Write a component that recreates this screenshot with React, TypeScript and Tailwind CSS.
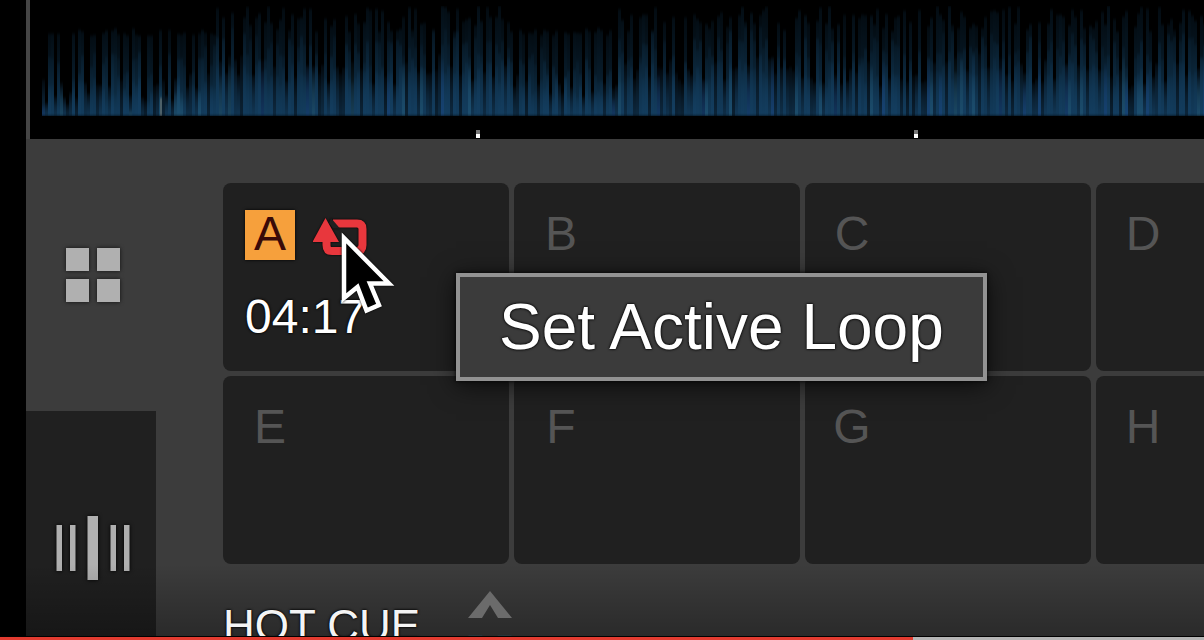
import { useState } from "react";

const PADS = ["A", "B", "C", "D", "E", "F", "G", "H"];
const OUTLINE = "[text-shadow:0_0_3px_#000,0_0_2px_#000]";

// ── Waveform ──────────────────────────────────────────────────────────────────

const WAVE_WIDTH = 1174;
const WAVE_BOTTOM = 116;
const BEATS = [446, 884];

type Bar = { x: number; w: number; y: number; fill: string; opacity: number };

function makeBars(): Bar[] {
  let seed = 41;
  const rand = () => {
    seed = (seed * 16807) % 2147483647;
    return seed / 2147483647;
  };
  const bars: Bar[] = [];
  for (let x = 12; x < WAVE_WIDTH; x += 3) {
    // quieter sections: the intro and the break after the first beat
    const quiet = x < 186 || (x > 478 && x < 588);
    const gap = x % 11 < 3 || rand() > 0.86;
    const swell = Math.sin(x / 17) * 4 + Math.sin(x / 41) * 4;

    if (!gap) {
      bars.push({ x, w: 3, y: quiet ? 28 + rand() * 8 : 6 + rand() * 26, fill: "url(#haze)", opacity: 0.75 + rand() * 0.25 });
      bars.push({ x, w: 3, y: (quiet ? 50 : 34) + swell + rand() * 26, fill: "url(#mid)", opacity: 0.4 + rand() * 0.45 });
    }
    bars.push({ x, w: 3, y: (quiet ? 76 : 60) + swell + rand() * 24, fill: "url(#low)", opacity: 0.5 + rand() * 0.4 });
    if (rand() > 0.86) {
      bars.push({ x, w: 3, y: (quiet ? 84 : 56) + rand() * 26, fill: rand() > 0.5 ? "url(#royal)" : "url(#teal)", opacity: 0.45 });
    }
  }
  return bars;
}

const BARS = makeBars();

const GRADIENTS = [
  { id: "haze", color: "#0d2f48", top: 0.3, mid: 0.6 },
  { id: "mid", color: "#123c5c", top: 0.25, mid: 0.6 },
  { id: "low", color: "#143f62", top: 0.2, mid: 0.7 },
  { id: "royal", color: "#1b4a8c", top: 0.15, mid: 0.7 },
  { id: "teal", color: "#27617f", top: 0.15, mid: 0.7 },
];

function Waveform() {
  return (
    <svg
      viewBox={`0 0 ${WAVE_WIDTH} 139`}
      preserveAspectRatio="none"
      className="block h-[139px] w-full bg-black"
      role="img"
      aria-label="Track waveform"
    >
      <defs>
        {GRADIENTS.map((g) => (
          <linearGradient key={g.id} id={g.id} x1="0" y1="0" x2="0" y2="1">
            <stop offset="0" stopColor={g.color} stopOpacity={g.top} />
            <stop offset="0.5" stopColor={g.color} stopOpacity={g.mid} />
            <stop offset="1" stopColor={g.color} />
          </linearGradient>
        ))}
        <filter id="soft" x="0" y="0" width="1" height="1" colorInterpolationFilters="sRGB">
          <feGaussianBlur stdDeviation="0.7 1.5" />
        </filter>
      </defs>
      <g filter="url(#soft)">
        {BARS.map((b, i) => (
          <rect key={i} x={b.x} y={b.y} width={b.w} height={WAVE_BOTTOM - b.y} fill={b.fill} opacity={b.opacity} />
        ))}
        <rect x="130" y="98" width="2" height="18" fill="#4d6068" />
      </g>
      {BEATS.map((x) => (
        <g key={x}>
          <rect x={x} y="130" width="4" height="4" fill="#777" />
          <rect x={x} y="134" width="4" height="4" fill="#fff" />
        </g>
      ))}
    </svg>
  );
}

// ── Icons ─────────────────────────────────────────────────────────────────────

function GridIcon() {
  return (
    <svg width="54" height="54" viewBox="0 0 54 54" fill="#b0b0b0" className="drop-shadow-[0_0_2px_#111]">
      <rect width="23" height="23" />
      <rect x="31" width="23" height="23" />
      <rect y="31" width="23" height="23" />
      <rect x="31" y="31" width="23" height="23" />
    </svg>
  );
}

function BarsIcon() {
  return (
    <svg width="74" height="64" viewBox="0 0 74 64" fill="#b0b0b0" className="drop-shadow-[0_0_2px_#000]">
      <rect x="0.5" y="9" width="5.5" height="46" />
      <rect x="14" y="9" width="5.5" height="46" />
      <rect x="31.5" y="0" width="10.5" height="64" />
      <rect x="54.5" y="9" width="5.5" height="46" />
      <rect x="68" y="9" width="5.5" height="46" />
    </svg>
  );
}

function LoopIcon() {
  return (
    <svg width="56" height="40" viewBox="0 0 56 40" className="drop-shadow-[0_0_1px_#000]">
      <path d="M12.500 0 L26 24 H-0.500 Z" fill="#e8373d" />
      <path
        d="M20 5.500 H44 Q49.500 5.500 49.500 11 V27 Q49.500 33 43.500 33 H19 Q13.500 33 13.500 27 V22"
        fill="none"
        stroke="#e8373d"
        strokeWidth="8"
      />
      <path d="M18 0 L27 10.500 H20 L16 5 Z" fill="#202020" />
    </svg>
  );
}

function Cursor() {
  return (
    <svg width="56" height="86" viewBox="0 0 56 86" className="pointer-events-none absolute top-[47px] left-[117px] z-20 drop-shadow-[0_0_1px_#000]">
      <path
        d="M4 8 V68 L17.500 57 L26.500 80.500 L39 75 L30 53.500 H49 Z"
        fill="#000"
        stroke="#fff"
        strokeWidth="4.5"
      />
    </svg>
  );
}

// ── Pads ──────────────────────────────────────────────────────────────────────

function Pad({ label, active }: { label: string; active: boolean }) {
  return (
    <div className="relative">
      <button
        aria-label={`Hot cue ${label}`}
        className="block h-[188px] w-full rounded-lg bg-[#202020] px-[22px] pt-[27px] text-left align-top"
      >
        <span className="flex h-full flex-col">
          <span className="flex items-start gap-[18px]">
            <span
              className={`h-[50px] w-[50px] text-center text-5xl leading-[48px] ${
                active ? "bg-[#f6a03c] text-[#3a0a08] shadow-[0_0_3px_#000]" : "text-[#555]"
              }`}
            >
              {label}
            </span>
            {active && (
              <span className="pt-2">
                <LoopIcon />
              </span>
            )}
          </span>
          {active && <span className={`mt-[33px] text-5xl leading-[48px] text-white ${OUTLINE}`}>04:17</span>}
        </span>
      </button>
      {active && (
        <>
          <Cursor />
          <div
            role="tooltip"
            className={`absolute top-[90px] left-[233px] z-10 border-4 border-[#929292] bg-[#3b3b3b] px-[39px] py-[18px] text-[64px] leading-[64px] whitespace-nowrap text-white shadow-[0_4px_24px_#000a,0_0_4px_#000] ${OUTLINE}`}
          >
            Set Active Loop
          </div>
        </>
      )}
    </div>
  );
}

// ── App ───────────────────────────────────────────────────────────────────────

export default function App() {
  const [progress, setProgress] = useState(75.8);

  return (
    <div className="relative flex h-screen overflow-hidden bg-black font-['Liberation_Sans',Arial,sans-serif]">
      <main className="ml-[26px] flex min-w-0 flex-1 flex-col bg-[#3c3c3c]">
        <div className="border-l-4 border-[#454545]">
          <Waveform />
        </div>

        <div className="flex min-h-0 flex-1">
          <nav className="flex w-[130px] shrink-0 flex-col">
            <button aria-label="Pads" className="flex h-[272px] items-center justify-center pl-1">
              <GridIcon />
            </button>
            <button aria-label="Beat jump" className="flex flex-1 items-start justify-center bg-[#202020] pt-[105px] pl-1">
              <BarsIcon />
            </button>
          </nav>

          <section className="ml-[67px] min-w-0 flex-1 overflow-hidden pt-11">
            <div className="grid grid-cols-[repeat(4,286px)] gap-[5px]">
              {PADS.map((p) => (
                <Pad key={p} label={p} active={p === "A"} />
              ))}
            </div>
            <div className="relative z-40 flex items-start gap-12 pt-[26px]">
              <h2 className={`pt-[14px] text-[44px] leading-[44px] whitespace-nowrap text-[#f4f4f4] ${OUTLINE}`}>HOT CUE</h2>
              <button aria-label="Change pad mode">
                <svg width="44" height="72" viewBox="0 0 44 72">
                  <path d="M22 1 L44 28 H30 L22 15 L14 28 H0 Z" fill="#6b6b6b" />
                  <path d="M22 72 L44 45 H30 L22 58 L14 45 H0 Z" fill="#26363b" />
                </svg>
              </button>
            </div>
          </section>
        </div>
      </main>

      {/* player chrome over the frame */}
      <div className="pointer-events-none absolute inset-x-0 bottom-1 z-30 h-[72px] bg-linear-to-b from-transparent to-black/30" />
      <div className="absolute inset-x-0 bottom-0 z-50 border-t border-black">
        <input
          type="range"
          aria-label="Seek"
          min={0}
          max={100}
          step={0.1}
          value={progress}
          onChange={(e) => setProgress(Number(e.target.value))}
          className="block h-[3px] w-full appearance-none [&::-webkit-slider-thumb]:h-0 [&::-webkit-slider-thumb]:w-0 [&::-webkit-slider-thumb]:appearance-none"
          style={{ background: `linear-gradient(to right, #e23b30 ${progress}%, #b4b4b4 ${progress}%)` }}
        />
      </div>
    </div>
  );
}
